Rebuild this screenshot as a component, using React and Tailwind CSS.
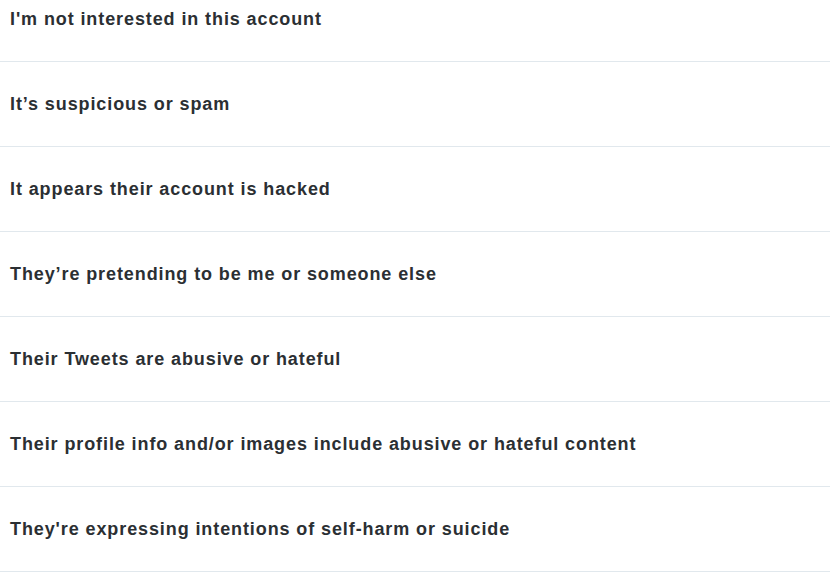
export default function App() {
  const items = [
    "I'm not interested in this account",
    "It\u2019s suspicious or spam",
    "It appears their account is hacked",
    "They\u2019re pretending to be me or someone else",
    "Their Tweets are abusive or hateful",
    "Their profile info and/or images include abusive or hateful content",
    "They're expressing intentions of self-harm or suicide",
  ];
  return (
    <div className="w-[830px] h-[575px] bg-white overflow-hidden font-['Liberation_Sans',Arial,sans-serif]">
      {items.map((t, i) => (
        <div
          key={i}
          className={`${i === 0 ? "h-[62px] pb-[23px]" : "h-[85px]"} flex items-center pl-[10px] border-b border-[#e1e8ed] text-[18px] tracking-[0.9px] font-bold text-[#2b2f33]`}
        >
          {t}
        </div>
      ))}
    </div>
  );
}
